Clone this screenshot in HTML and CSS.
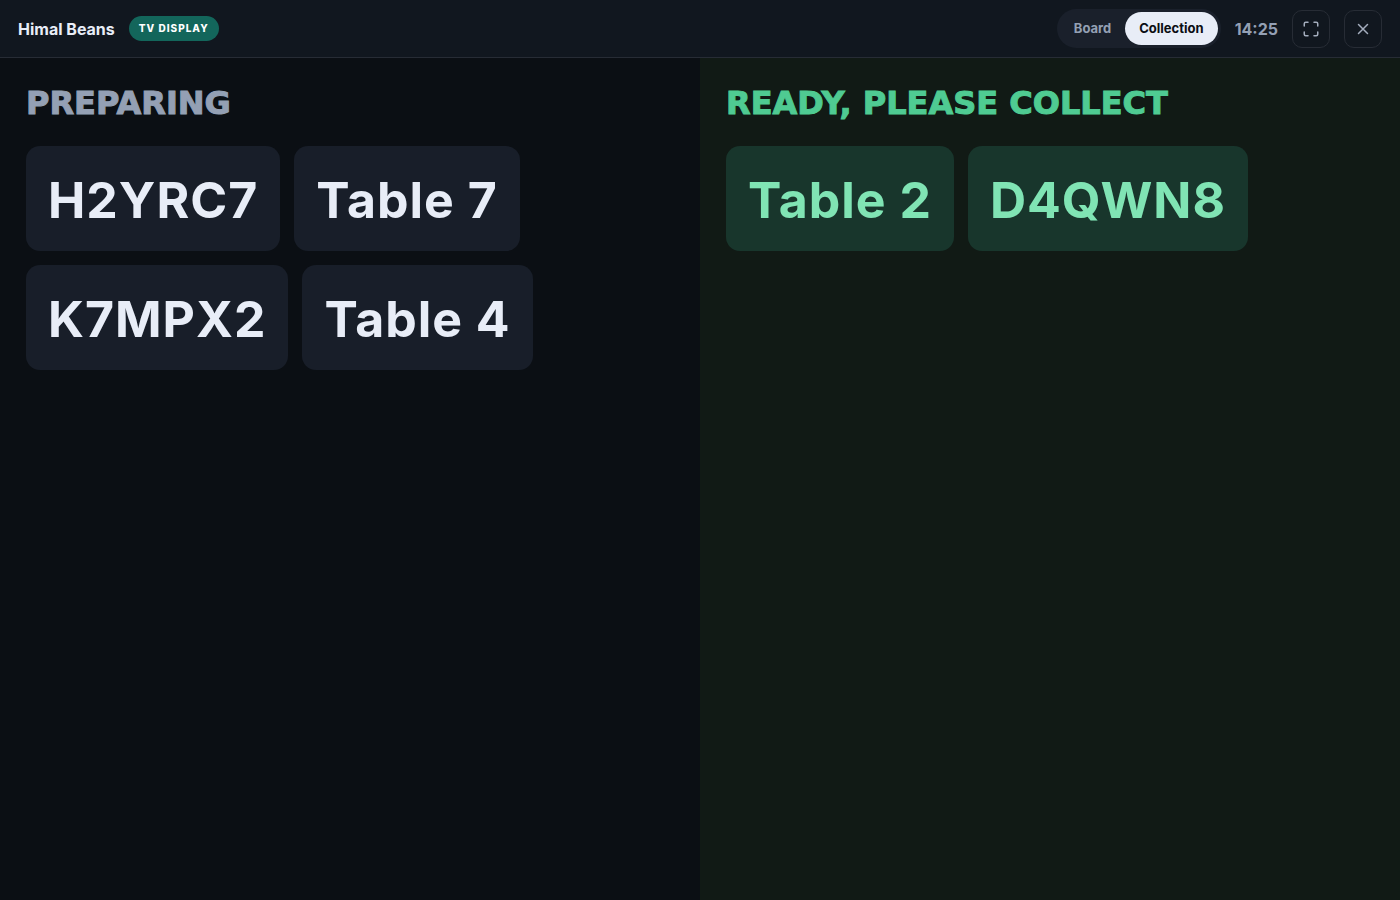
FILE: index.html
```html
<!DOCTYPE html>
<html lang="en">
<head>
  <meta charset="UTF-8">
  <meta name="viewport" content="width=device-width, initial-scale=1.0">
  <title>Himal Beans - TV display</title>
  <link rel="stylesheet" href="styles.css">
</head>
<body>
  <header class="topbar">
    <h1 class="brand">Himal Beans</h1>
    <span class="badge">TV DISPLAY</span>
    <div class="controls">
      <div class="switch">
        <button type="button" class="switch-option">Board</button>
        <button type="button" class="switch-option active" aria-pressed="true">Collection</button>
      </div>
      <time class="clock">14:25</time>
      <button type="button" class="icon-button" aria-label="Full screen">
        <svg viewBox="0 0 24 24"><path d="M8 3H5a2 2 0 0 0-2 2v3M21 8V5a2 2 0 0 0-2-2h-3M3 16v3a2 2 0 0 0 2 2h3M16 21h3a2 2 0 0 0 2-2v-3"/></svg>
      </button>
      <button type="button" class="icon-button" aria-label="Close">
        <svg viewBox="0 0 24 24"><path d="M18 6 6 18M6 6l12 12"/></svg>
      </button>
    </div>
  </header>

  <main class="board">
    <section class="column">
      <h2 class="column-title">PREPARING</h2>
      <ul class="tickets">
        <li class="ticket">H2YRC7</li>
        <li class="ticket">Table 7</li>
        <li class="ticket">K7MPX2</li>
        <li class="ticket">Table 4</li>
      </ul>
    </section>
    <section class="column ready">
      <h2 class="column-title">READY, PLEASE COLLECT</h2>
      <ul class="tickets">
        <li class="ticket">Table 2</li>
        <li class="ticket">D4QWN8</li>
      </ul>
    </section>
  </main>
</body>
</html>
```
FILE: styles.css
```css
* {
  margin: 0;
  padding: 0;
  box-sizing: border-box;
}

body {
  display: flex;
  flex-direction: column;
  min-height: 100vh;
  background: #0b0f14;
  color: #e8edf7;
  font-family: Inter, "Liberation Sans", sans-serif;
}

button {
  border: none;
  background: none;
  font: inherit;
  cursor: pointer;
}

.topbar {
  display: flex;
  align-items: center;
  gap: 14px;
  padding: 9px 18px;
  background: #11171f;
  border-bottom: 1px solid #272c35;
}

.brand {
  font-size: 16px;
  font-weight: 700;
  line-height: 24px;
}

.badge {
  padding: 4px 10px;
  border-radius: 999px;
  background: #13665b;
  color: #fff;
  font-size: 10px;
  font-weight: 800;
  line-height: 17px;
  letter-spacing: 1px;
}

.controls {
  display: flex;
  align-items: center;
  gap: 14px;
  margin-left: auto;
}

.switch {
  display: flex;
  padding: 3px;
  border-radius: 999px;
  background: #1a202b;
}

.switch-option {
  padding: 8px 14px;
  border-radius: 999px;
  color: #94a0b4;
  font-size: 13px;
  font-weight: 700;
  line-height: 17px;
}

.switch-option.active {
  background: #e8edf7;
  color: #0a0e13;
}

.clock {
  color: #94a0b4;
  font-size: 16px;
  font-weight: 700;
}

.icon-button {
  display: grid;
  place-items: center;
  width: 38px;
  height: 38px;
  border: 1px solid #272c35;
  border-radius: 10px;
  color: #a4adbd;
}

.icon-button svg {
  width: 18px;
  height: 18px;
  fill: none;
  stroke: currentColor;
  stroke-width: 2;
  stroke-linecap: round;
  stroke-linejoin: round;
}

.board {
  flex: 1;
  display: grid;
  grid-template-columns: 1fr 1fr;
}

.column {
  padding: 26px;
}

.column-title {
  margin-bottom: 24px;
  color: #94a0b4;
  font-family: "DejaVu Sans", sans-serif;
  font-size: 32px;
  font-weight: 700;
  line-height: 38px;
  -webkit-text-stroke: 1px currentColor;
}

.tickets {
  display: flex;
  flex-wrap: wrap;
  gap: 14px;
  list-style: none;
}

.ticket {
  padding: 22px 22px 18px;
  border-radius: 14px;
  background: #181e29;
  font-size: 50px;
  font-weight: 700;
  line-height: 65px;
  letter-spacing: 1px;
}

.ready {
  background: #111a15;
}

.ready .column-title {
  color: #4fcb92;
}

.ready .ticket {
  background: #18362c;
  color: #80e4b4;
}
```
